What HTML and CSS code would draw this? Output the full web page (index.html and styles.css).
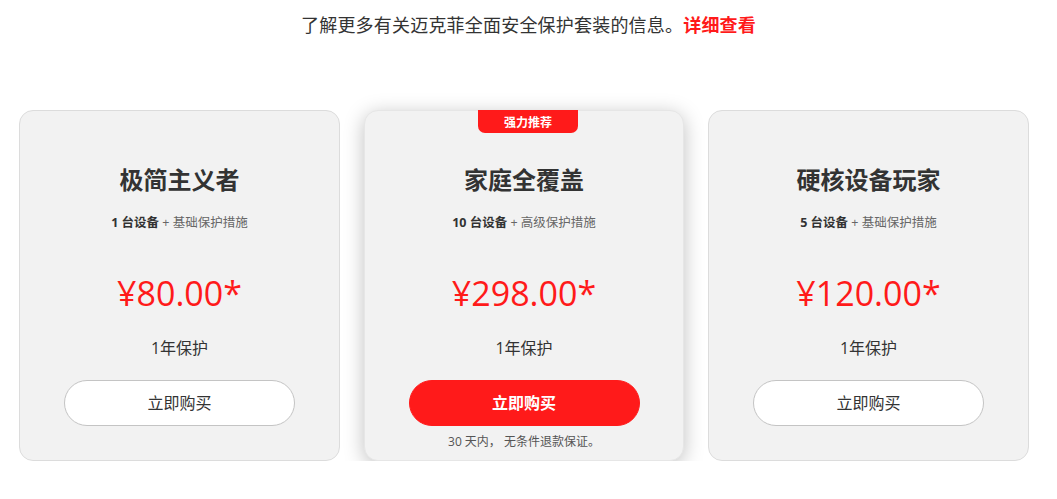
FILE: index.html
```html
<!DOCTYPE html>
<html lang="zh-CN">
<head>
<meta charset="utf-8">
<title>迈克菲全面安全保护</title>
<link rel="stylesheet" href="styles.css">
</head>
<body>
<p class="intro">了解更多有关迈克菲全面安全保护套装的信息。<a class="intro-link" href="#">详细查看</a></p>
<div class="plans">
  <div class="card">
    <h2 class="card-title">极简主义者</h2>
    <p class="card-sub"><b>1 台设备</b> + 基础保护措施</p>
    <p class="price">¥80.00*</p>
    <p class="term">1年保护</p>
    <a class="btn" href="#">立即购买</a>
  </div>
  <div class="card card-featured">
    <span class="badge">强力推荐</span>
    <h2 class="card-title">家庭全覆盖</h2>
    <p class="card-sub"><b>10 台设备</b> + 高级保护措施</p>
    <p class="price">¥298.00*</p>
    <p class="term">1年保护</p>
    <a class="btn btn-primary" href="#">立即购买</a>
    <p class="note">30 天内， 无条件退款保证。</p>
  </div>
  <div class="card">
    <h2 class="card-title">硬核设备玩家</h2>
    <p class="card-sub"><b>5 台设备</b> + 基础保护措施</p>
    <p class="price">¥120.00*</p>
    <p class="term">1年保护</p>
    <a class="btn" href="#">立即购买</a>
  </div>
</div>
</body>
</html>
```

FILE: styles.css
```css
* { box-sizing: border-box; }
body {
  margin: 0;
  background: #fff;
  color: #333;
  font-family: "Open Sans", "Noto Sans CJK SC", sans-serif;
}
.intro {
  margin: 0;
  padding-top: 12px;
  text-align: center;
  font-size: 18px;
  line-height: 24px;
  letter-spacing: 0.2px;
  color: #333;
  font-family: "Noto Sans CJK SC", sans-serif;
}
.intro-link {
  color: #ff1a1a;
  font-weight: 700;
  text-decoration: none;
}
.plans {
  display: grid;
  grid-template-columns: 321px 320px 321px;
  column-gap: 24px;
  margin: 74px 0 0 19px;
  align-items: stretch;
}
.card {
  position: relative;
  display: flex;
  flex-direction: column;
  align-items: center;
  background: #f2f2f2;
  border: 1px solid #dcdcdc;
  border-radius: 14px;
  padding: 53px 0 9px;
}
.card-featured {
  border-color: #e6e6e6;
  box-shadow: 0 4px 20px rgba(0,0,0,0.25);
}
.badge {
  position: absolute;
  top: -1px;
  left: 50%;
  transform: translateX(calc(-50% + 4px));
  width: 100px;
  height: 23px;
  background: #ff1a1a;
  color: #fff;
  font-size: 12px;
  font-weight: 700;
  line-height: 23px;
  text-align: center;
  border-radius: 0 0 7px 7px;
  font-family: "Noto Sans CJK SC", sans-serif;
}
.card-title {
  margin: 0;
  font-size: 24px;
  line-height: 32px;
  font-weight: 700;
  color: #333;
}
.card-sub {
  margin: 17px 0 0;
  font-size: 12.5px;
  line-height: 20px;
  color: #666;
}
.card-sub b {
  color: #333;
  font-weight: 700;
}
.price {
  margin: 38px 0 0;
  font-size: 34px;
  line-height: 44px;
  color: #ff1a1a;
  font-weight: 400;
}
.term {
  margin: 21px 0 0;
  font-size: 16px;
  line-height: 24px;
  color: #333;
}
.btn {
  margin-top: 20px;
  width: 231px;
  height: 46px;
  border-radius: 23px;
  background: #fff;
  border: 1px solid #c4c4c4;
  color: #333;
  font-size: 16px;
  line-height: 44px;
  text-align: center;
  text-decoration: none;
}
.btn-primary {
  background: #ff1a1a;
  border-color: #ff1a1a;
  color: #fff;
  font-weight: 700;
}
.note {
  margin: 7px 0 0;
  font-size: 12px;
  line-height: 18px;
  color: #555;
}
```
